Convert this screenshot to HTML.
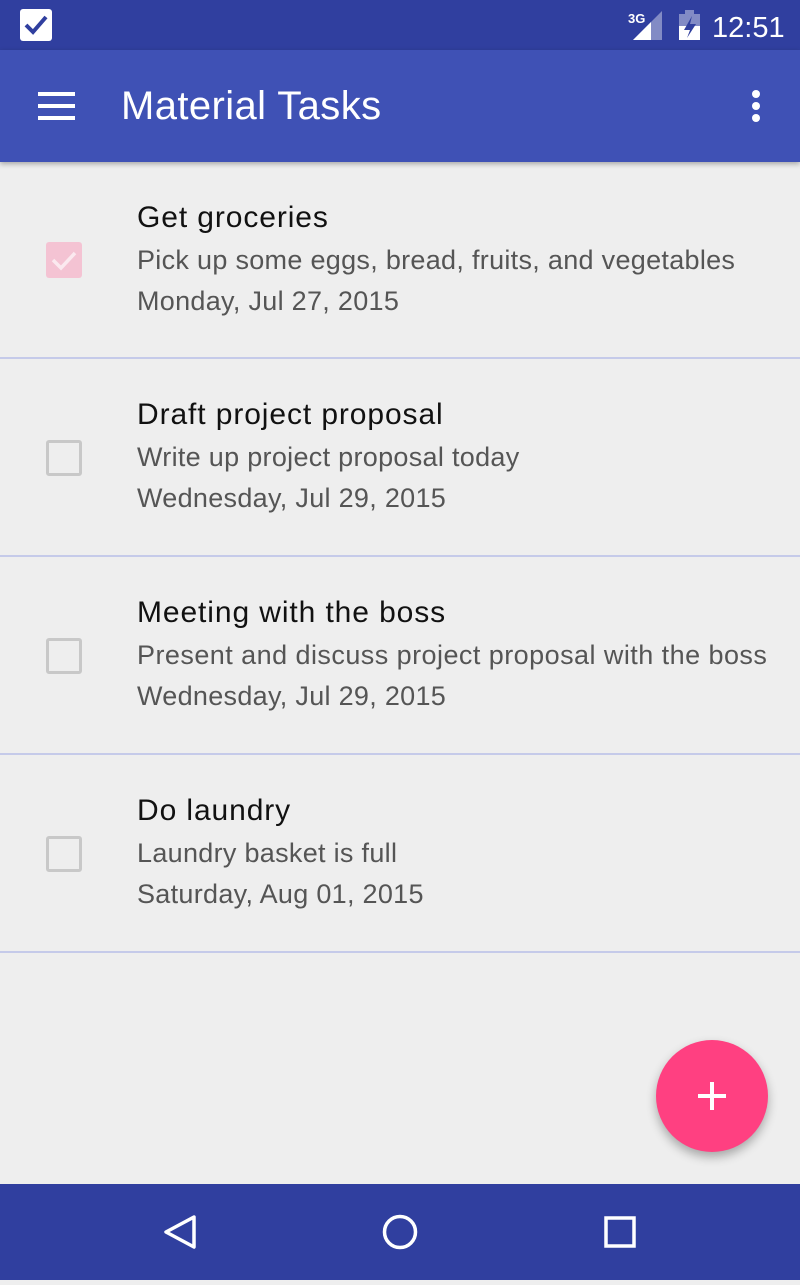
<!DOCTYPE html>
<html><head><meta charset="utf-8"><style>
*{margin:0;padding:0;box-sizing:border-box}
body{width:800px;height:1280px;background:#eeeeee;font-family:"Liberation Sans",sans-serif;position:relative;overflow:hidden}
.status{position:absolute;top:0;left:0;width:800px;height:50px;background:#303f9f}
.bar{position:absolute;top:50px;left:0;width:800px;height:112px;background:#3f51b5;box-shadow:0 2px 5px rgba(0,0,0,.3)}
.bar .t{position:absolute;left:121px;top:34px;color:#fff;font-size:40px;letter-spacing:0.4px}
.row{position:absolute;left:0;width:800px;height:198px;border-bottom:2px solid #c5cae9}
.cb{position:absolute;left:46px;width:36px;height:36px;border:3px solid #c8c8c8;border-radius:3px}
.ti{position:absolute;left:137px;font-size:30px;color:#111;letter-spacing:0.9px}
.st{position:absolute;left:137px;font-size:27px;color:#555;letter-spacing:0.3px}
.fab{position:absolute;left:656px;top:1040px;width:112px;height:112px;border-radius:50%;background:#ff4081;box-shadow:0 5px 10px rgba(0,0,0,.3)}
.nav{position:absolute;top:1184px;left:0;width:800px;height:96px;background:#303f9f}
</style></head><body>
<div class="status">
<svg width="800" height="50" style="position:absolute;left:0;top:0">
<rect x="20" y="9" width="32" height="32" rx="3" fill="#fff"/>
<path d="M26 25 L33 32 L46 17" stroke="#303f9f" stroke-width="4" fill="none"/>
<text x="628" y="23" font-family="Liberation Sans" font-size="13" font-weight="bold" fill="#fff">3G</text>
<path d="M633 40 L662 40 L662 11 Z" fill="rgba(255,255,255,.4)"/>
<path d="M633 40 L651 40 L651 22 Z" fill="#fff"/>
<rect x="679" y="14" width="21" height="26" fill="rgba(255,255,255,.4)"/><rect x="685" y="10" width="9" height="4" fill="rgba(255,255,255,.4)"/>
<rect x="679" y="26" width="21" height="14" fill="#fff"/>
<path d="M692 16 L684 30 L690 30 L687 38 L696 24 L690 24 Z" fill="#303f9f"/>
<text x="712" y="37" font-family="Liberation Sans" font-size="29" fill="#fff">12:51</text>
</svg></div>
<div class="bar">
<svg width="800" height="112" style="position:absolute;left:0;top:0">
<rect x="38" y="42" width="37" height="4" fill="#fff"/><rect x="38" y="54" width="37" height="4" fill="#fff"/><rect x="38" y="66" width="37" height="4" fill="#fff"/>
<circle cx="756" cy="44" r="4" fill="#fff"/><circle cx="756" cy="56" r="4" fill="#fff"/><circle cx="756" cy="68" r="4" fill="#fff"/>
</svg>
<div class="t">Material Tasks</div></div>

<div class="row" style="top:162px;height:197px">
<div style="position:absolute;left:46px;top:80px;width:36px;height:36px;background:#f4c3d3;border-radius:3px"><svg width="36" height="36"><path d="M7 18 L15 26 L29 11" stroke="#fbe9ef" stroke-width="3.5" fill="none"/></svg></div>
<div class="ti" style="top:39px">Get groceries</div>
<div class="st" style="top:83px">Pick up some eggs, bread, fruits, and vegetables</div>
<div class="st" style="top:124px">Monday, Jul 27, 2015</div></div>

<div class="row" style="top:359px">
<div class="cb" style="top:81px"></div>
<div class="ti" style="top:39px">Draft project proposal</div>
<div class="st" style="top:83px">Write up project proposal today</div>
<div class="st" style="top:124px">Wednesday, Jul 29, 2015</div></div>

<div class="row" style="top:557px">
<div class="cb" style="top:81px"></div>
<div class="ti" style="top:39px">Meeting with the boss</div>
<div class="st" style="top:83px;letter-spacing:0.45px">Present and discuss project proposal with the boss</div>
<div class="st" style="top:124px">Wednesday, Jul 29, 2015</div></div>

<div class="row" style="top:755px">
<div class="cb" style="top:81px"></div>
<div class="ti" style="top:39px">Do laundry</div>
<div class="st" style="top:83px">Laundry basket is full</div>
<div class="st" style="top:124px">Saturday, Aug 01, 2015</div></div>

<div class="fab"><svg width="112" height="112"><rect x="42" y="54" width="28" height="4" fill="#fff"/><rect x="54" y="42" width="4" height="28" fill="#fff"/></svg></div>

<div class="nav"><svg width="800" height="96">
<path d="M194 33 L166 48 L194 63 Z" stroke="#fff" stroke-width="3.5" fill="none" stroke-linejoin="round"/>
<circle cx="400" cy="48" r="15.5" stroke="#fff" stroke-width="3.5" fill="none"/>
<rect x="606" y="34" width="28" height="28" stroke="#fff" stroke-width="3.5" fill="none"/>
</svg></div>
</body></html>
